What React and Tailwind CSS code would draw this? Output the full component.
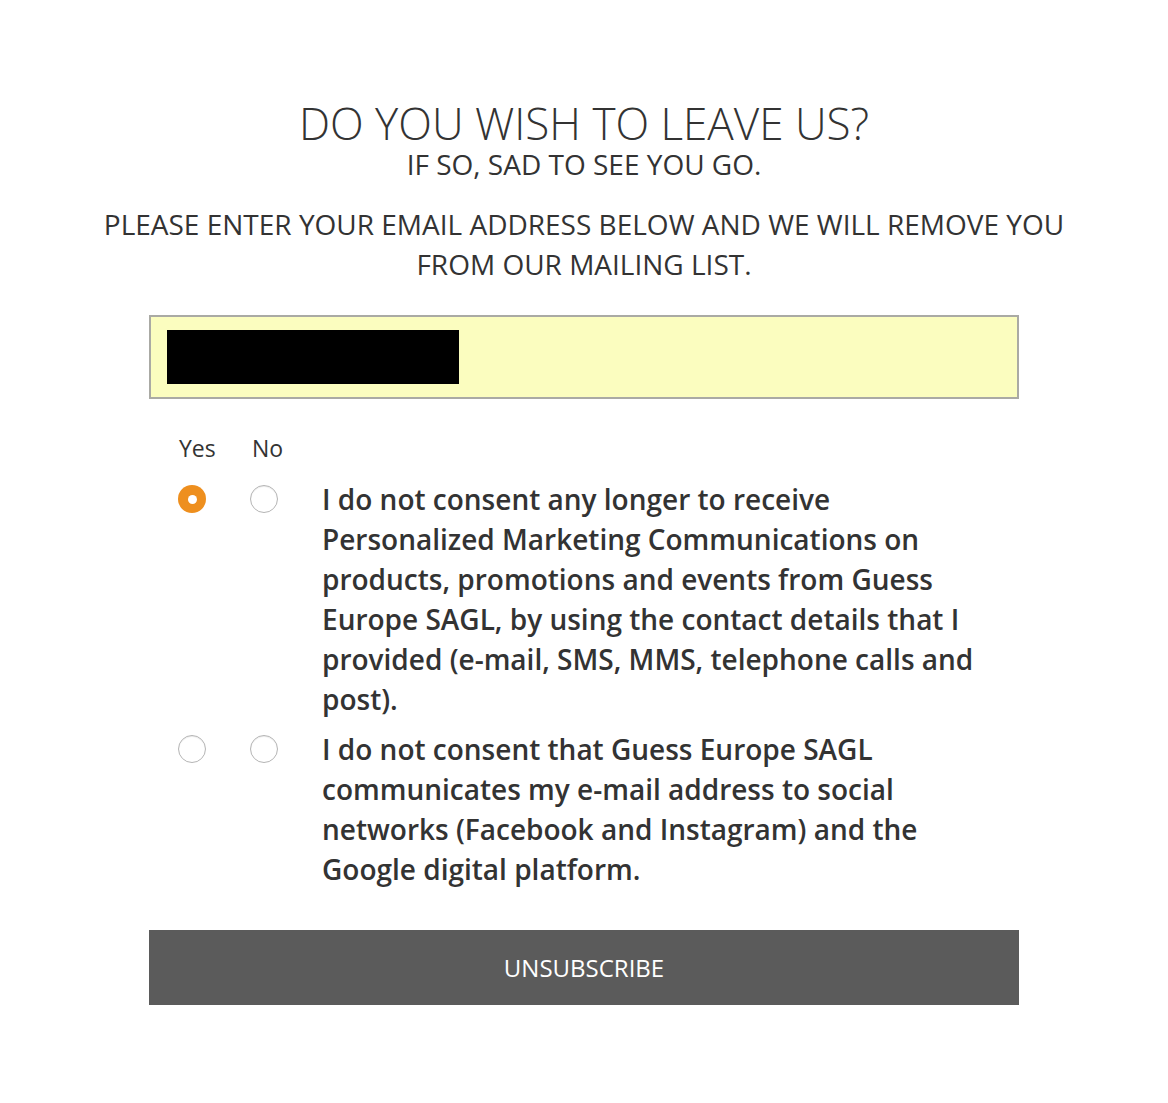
import { useState } from "react";

const consents = [
  {
    id: "marketing",
    text: "I do not consent any longer to receive Personalized Marketing Communications on products, promotions and events from Guess Europe SAGL, by using the contact details that I provided (e-mail, SMS, MMS, telephone calls and post).",
  },
  {
    id: "social",
    text: "I do not consent that Guess Europe SAGL communicates my e-mail address to social networks (Facebook and Instagram) and the Google digital platform.",
  },
];

function Radio({ checked, onClick }) {
  return (
    <button
      type="button"
      onClick={onClick}
      className={`w-[28px] h-[28px] rounded-full flex items-center justify-center ${
        checked
          ? "bg-[#ee8f1e]"
          : "bg-white border border-[#b5b5b5] shadow-[inset_0_1px_1px_rgba(0,0,0,0.08)]"
      }`}
    >
      {checked && <span className="w-[9px] h-[9px] rounded-full bg-white" />}
    </button>
  );
}

export default function App() {
  const [answers, setAnswers] = useState({ marketing: "yes", social: "" });

  return (
    <div
      className="min-h-screen bg-white text-[#333333]"
      style={{ fontFamily: '"Open Sans", sans-serif' }}
    >
      <div className="pt-[99px] text-center">
        <h1 className="text-[44px] leading-[48px] font-light text-[#333]">
          DO YOU WISH TO LEAVE US?
        </h1>
        <p className="text-[28px] leading-[34px]">IF SO, SAD TO SEE YOU GO.</p>
        <p className="text-[28px] leading-[40px] mt-[23px] max-w-[990px] mx-auto">
          PLEASE ENTER YOUR EMAIL ADDRESS BELOW AND WE WILL REMOVE YOU FROM OUR
          MAILING LIST.
        </p>
      </div>

      <div className="w-[870px] mx-auto mt-[31px]">
        {/* email field, value hidden */}
        <div className="h-[84px] bg-[#fbfdbf] border-2 border-[#aaaaa4] flex items-center px-[16px]">
          <div className="w-[292px] h-[54px] bg-black" />
        </div>

        <div className="pl-[29px] mt-[34px]">
          <div className="flex text-[23px] leading-[30px]">
            <span className="w-[72px] pl-[1px]">Yes</span>
            <span className="w-[72px] pl-[2px]">No</span>
          </div>

          <div className="mt-[16px] flex flex-col gap-[10px]">
            {consents.map((c) => (
              <div key={c.id} className="flex">
                <div className="w-[72px] pt-[6px]">
                  <Radio
                    checked={answers[c.id] === "yes"}
                    onClick={() => setAnswers({ ...answers, [c.id]: "yes" })}
                  />
                </div>
                <div className="w-[72px] pt-[6px]">
                  <Radio
                    checked={answers[c.id] === "no"}
                    onClick={() => setAnswers({ ...answers, [c.id]: "no" })}
                  />
                </div>
                <p className="w-[665px] text-[28px] leading-[40px] font-semibold">
                  {c.text}
                </p>
              </div>
            ))}
          </div>
        </div>

        <button
          type="button"
          className="mt-[41px] w-full h-[75px] bg-[#5b5b5b] text-white text-[24px]"
        >
          UNSUBSCRIBE
        </button>
      </div>
    </div>
  );
}
